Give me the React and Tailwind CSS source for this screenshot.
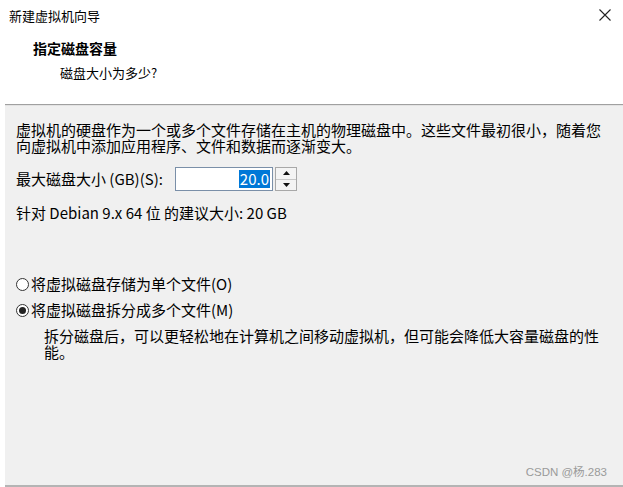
export default function App() {
  return (
    <div
      className="w-[623px] h-[487px] bg-white flex text-black overflow-hidden"
      style={{ fontFamily: '"Noto Sans CJK SC", "Liberation Sans", sans-serif' }}
    >
      <div className="w-[5px] shrink-0 bg-white" />
      <div className="flex-1 flex flex-col">
        {/* 标题区 */}
        <header className="h-[104px] bg-white flex flex-col -ml-[5px]">
          <div className="flex items-center justify-between h-[30px] pl-[9px] pr-[11px]">
            <span className="text-[13px] leading-none">新建虚拟机向导</span>
            <svg className="w-[14px] h-[14px]" viewBox="0 0 14 14" fill="none" stroke="#222" strokeWidth={1.1}>
              <path d="M1.5 1.5l11 11M12.5 1.5l-11 11" />
            </svg>
          </div>
          <div className="pl-[33px] pt-[11px] text-[14px] font-bold leading-none">指定磁盘容量</div>
          <div className="pl-[60px] pt-[11px] text-[13px] leading-none">磁盘大小为多少?</div>
        </header>
        <div className="h-[2px] bg-[#a0a0a0] border-b border-[#e3e3e3]" />

        {/* 内容区 */}
        <main className="flex-1 bg-[#f0f0f0] border-b-2 border-[#b4b4b4] pl-[11px] text-[15px] leading-[16px]">
          <div className="pt-[16px]">
            <div>虚拟机的硬盘作为一个或多个文件存储在主机的物理磁盘中。这些文件最初很小，随着您</div>
            <div>向虚拟机中添加应用程序、文件和数据而逐渐变大。</div>
          </div>

          <div className="flex items-center mt-[13px] h-[24px]">
            <span className="w-[159px]">最大磁盘大小 (GB)(S):</span>
            <div className="w-[98px] h-[24px] bg-white border border-[#7a8fa8] flex items-center justify-end pr-[2px]">
              <span className="bg-[#0078d7] text-white px-[1px] leading-[18px]">20.0</span>
            </div>
            <div className="ml-[2px] w-[22px] h-[24px] border border-[#a8a8a8] bg-[#f4f4f4] flex flex-col">
              <div className="flex-1 flex items-center justify-center border-b border-[#c8c8c8]">
                <svg width="7" height="4" viewBox="0 0 7 4"><path d="M3.5 0L7 4H0z" fill="#111" /></svg>
              </div>
              <div className="flex-1 flex items-center justify-center">
                <svg width="7" height="4" viewBox="0 0 7 4"><path d="M0 0h7L3.5 4z" fill="#111" /></svg>
              </div>
            </div>
          </div>

          <p className="mt-[14px]">针对 Debian 9.x 64 位 的建议大小: 20 GB</p>

          <div className="mt-[55px] flex flex-col gap-[10px]">
            <label className="flex items-center gap-[2px]">
              <span className="w-[13px] h-[13px] rounded-full border border-[#333] bg-white" />
              <span>将虚拟磁盘存储为单个文件(O)</span>
            </label>
            <label className="flex items-center gap-[2px]">
              <span className="w-[13px] h-[13px] rounded-full border border-[#333] bg-white flex items-center justify-center">
                <span className="w-[7px] h-[7px] rounded-full bg-[#222]" />
              </span>
              <span>将虚拟磁盘拆分成多个文件(M)</span>
            </label>
          </div>

          <div className="pl-[28px] mt-[10px]">
            <div>拆分磁盘后，可以更轻松地在计算机之间移动虚拟机，但可能会降低大容量磁盘的性</div>
            <div>能。</div>
          </div>

          <div className="flex justify-end pr-[16px] mt-[105px]">
            <span className="text-[11.5px] leading-[14px] text-[#9a9a9a]" style={{ fontFamily: '"Liberation Sans", "Noto Sans CJK SC", sans-serif' }}>
              CSDN @杨.283
            </span>
          </div>
        </main>
      </div>
    </div>
  )
}
